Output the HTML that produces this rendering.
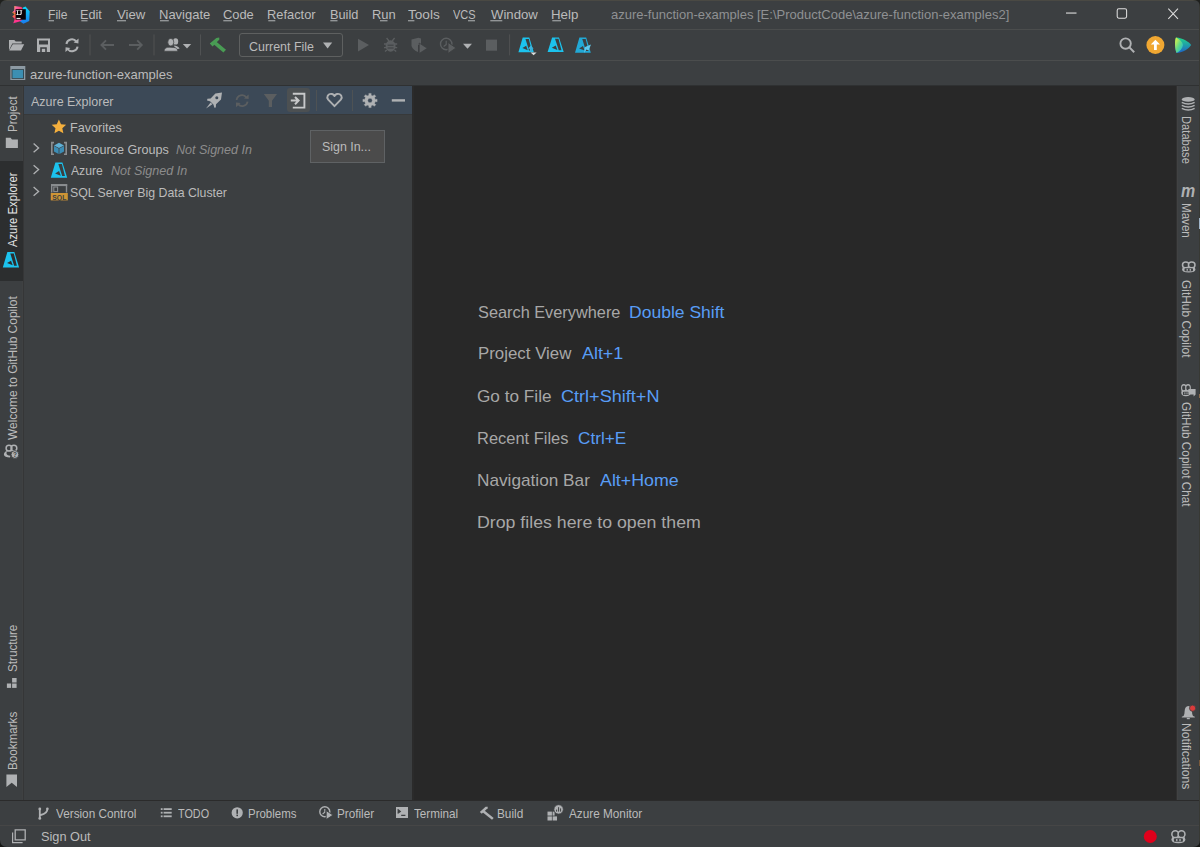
<!DOCTYPE html>
<html><head><meta charset="utf-8"><title>IntelliJ IDEA</title>
<style>
html,body{margin:0;padding:0;}
body{width:1200px;height:847px;overflow:hidden;background:#3c3f41;position:relative;font-family:"Liberation Sans",sans-serif;}
.b{position:absolute;}
.t{position:absolute;white-space:pre;transform-origin:0 0;font-family:"Liberation Sans",sans-serif;}
svg.ic{position:absolute;left:0;top:0;}
</style></head><body>
<!-- window top border -->
<div class="b" style="left:0;top:0;width:1200px;height:1px;background:#4a4943"></div>
<!-- menu / toolbar separators -->
<div class="b" style="left:0;top:29px;width:1200px;height:1px;background:#4b4d4d"></div>
<div class="b" style="left:0;top:60px;width:1200px;height:1px;background:#4b4d4d"></div>
<!-- nav bar bottom dark line -->
<div class="b" style="left:0;top:85px;width:1200px;height:1px;background:#2f3132"></div>
<!-- left stripe border -->
<div class="b" style="left:22px;top:86px;width:1px;height:714px;background:#3f4142"></div>
<div class="b" style="left:23px;top:86px;width:1px;height:714px;background:#353637"></div>
<div class="b" style="left:0;top:161px;width:23px;height:120px;background:#2c2e2f"></div>
<!-- selected stripe button -->
<!-- tool window header -->
<div class="b" style="left:24px;top:86px;width:388px;height:28px;background:#3c4957"></div>
<div class="b" style="left:24px;top:114px;width:388px;height:1px;background:#37393a"></div>
<!-- sign in icon hover bg -->
<div class="b" style="left:287px;top:88px;width:23px;height:24px;background:#4c5052;border-radius:3px"></div>
<!-- header separators -->
<div class="b" style="left:316px;top:90px;width:1px;height:21px;background:#4e5254"></div>
<div class="b" style="left:352px;top:90px;width:1px;height:21px;background:#4e5254"></div>
<!-- panel/editor border -->
<div class="b" style="left:412px;top:86px;width:2px;height:714px;background:#2b2b2b"></div>
<!-- editor -->
<div class="b" style="left:414px;top:86px;width:762px;height:714px;background:#282828"></div>
<!-- right stripe border -->
<div class="b" style="left:1176px;top:86px;width:1px;height:714px;background:#303030"></div>
<div class="b" style="left:1177px;top:86px;width:1px;height:714px;background:#414243"></div>
<!-- bottom dark line -->
<div class="b" style="left:0;top:800px;width:1200px;height:1px;background:#2b2b2b"></div>
<!-- status separator -->
<div class="b" style="left:0;top:825px;width:1200px;height:1px;background:#464646"></div>
<!-- sign in button -->
<div class="b" style="left:310px;top:130px;width:73px;height:31px;background:#4b4b4b;border:1px solid #5f6264"></div>
<!-- combobox -->
<div class="b" style="left:239px;top:33px;width:102px;height:22px;border:1px solid #5e6060;border-radius:3px"></div>
<!-- window right edge -->
<div class="b" style="left:1199px;top:0;width:1px;height:847px;background:#383934"></div>
<svg class="ic" width="1200" height="847" viewBox="0 0 1200 847"><rect x="48.5" y="20.2" width="5.5" height="1.1" fill="#a9abad"/><rect x="81.3" y="20.2" width="6.2" height="1.1" fill="#a9abad"/><rect x="117.0" y="20.2" width="9.0" height="1.1" fill="#a9abad"/><rect x="160.0" y="20.2" width="8.8" height="1.1" fill="#a9abad"/><rect x="223.3" y="20.2" width="8.7" height="1.1" fill="#a9abad"/><rect x="268.3" y="20.2" width="7.0" height="1.1" fill="#a9abad"/><rect x="330.3" y="20.2" width="7.2" height="1.1" fill="#a9abad"/><rect x="380.0" y="20.2" width="7.5" height="1.1" fill="#a9abad"/><rect x="408.0" y="20.2" width="6.4" height="1.1" fill="#a9abad"/><rect x="468.0" y="20.2" width="7.0" height="1.1" fill="#a9abad"/><rect x="490.3" y="20.2" width="12.0" height="1.1" fill="#a9abad"/><rect x="552.3" y="20.2" width="8.7" height="1.1" fill="#a9abad"/><defs><linearGradient id="ijl" x1="0" y1="0" x2="0" y2="1"><stop offset="0" stop-color="#f8d34a"/><stop offset="0.3" stop-color="#fb5fa8"/><stop offset="0.55" stop-color="#ff7b25"/><stop offset="1" stop-color="#fe2d73"/></linearGradient><linearGradient id="ijr" x1="0" y1="0" x2="0" y2="1"><stop offset="0" stop-color="#0ad7f7"/><stop offset="1" stop-color="#1a7af0"/></linearGradient><linearGradient id="ijt" x1="0" y1="0" x2="1" y2="0"><stop offset="0" stop-color="#fa7fd0"/><stop offset="1" stop-color="#fe2d73"/></linearGradient></defs><path d="M22.5,7.8 L25.5,6.4 L29.7,11.3 L29.2,21 L23.4,23.7 L19.5,21 L22.5,19 Z" fill="url(#ijr)"/><defs><linearGradient id="ijtop" x1="0" y1="0" x2="1" y2="0.3"><stop offset="0" stop-color="#f9d24a"/><stop offset="0.45" stop-color="#fd5aa0"/><stop offset="1" stop-color="#fe2d5e"/></linearGradient><linearGradient id="ijbot" x1="0" y1="0" x2="0.4" y2="1"><stop offset="0" stop-color="#ff9a1a"/><stop offset="0.5" stop-color="#fe4f6a"/><stop offset="1" stop-color="#fc2a9c"/></linearGradient></defs><path d="M14.3,6 L21.5,7 L23,9.5 L22.5,13.2 L12.1,12.6 L14.2,10.5 Z" fill="url(#ijtop)"/><path d="M12.1,12.4 L22.5,13 L22,20 L19.5,21.5 L13.3,23.2 L14.8,18.8 L12.3,16.4 L14.6,14.2 Z" fill="url(#ijbot)"/><rect x="15.6" y="9.2" width="10.2" height="10.5" fill="#0a0306"/><path d="M16.4,10.2 h2.3 v0.9 h-0.7 v2.9 h0.7 v0.9 h-2.3 v-0.9 h0.7 v-2.9 h-0.7 Z" fill="#f2f2f2"/><path d="M19.5,10.2 h2.7 v0.9 h-0.5 v2.7 q0,1.1 -1.2,1.1 h-1.2 v-0.9 h0.9 q0.4,0 0.4,-0.4 v-2.5 h-1.1 Z" fill="#f2f2f2"/><rect x="16.5" y="17.9" width="4" height="1.2" fill="#e8e8e8"/><rect x="1066" y="12.5" width="10.5" height="1.1" fill="#dedede"/><rect x="1117.2" y="8.8" width="9.4" height="9.4" rx="1.6" fill="none" stroke="#dedede" stroke-width="1.05"/><path d="M1168.3,8.6 L1178,18.9 M1178,8.6 L1168.3,18.9" stroke="#dedede" stroke-width="1.05"/><path d="M9,40 h5.3 l1.4,1.4 h6 v2 H12.3 L9,50.3 Z" fill="#afb1b3"/><path d="M12.8,44.2 H24.2 L21,50.5 H9.2 Z" fill="#afb1b3"/><path d="M37,38.6 H50 V52 H37 Z M39,40.6 V44.4 H48 V40.6 Z M40.2,47.2 V52 H46.8 V47.2 Z" fill="#afb1b3" fill-rule="evenodd"/><rect x="41.8" y="48.8" width="3.4" height="3.2" fill="#afb1b3"/><path d="M66.4,44 A5.6,5.6 0 0 1 76.4,41.6" fill="none" stroke="#afb1b3" stroke-width="2"/><path d="M73.6,42.6 L78.4,43.4 L78.6,38.6 Z" fill="#afb1b3"/><path d="M77.6,46.6 A5.6,5.6 0 0 1 67.6,49" fill="none" stroke="#afb1b3" stroke-width="2"/><path d="M70.4,48 L65.6,47.2 L65.4,52 Z" fill="#afb1b3"/><rect x="89.5" y="34.4" width="1" height="21" fill="#505253"/><rect x="153.5" y="34.4" width="1" height="21" fill="#505253"/><rect x="200.0" y="34.4" width="1" height="21" fill="#505253"/><rect x="509.1" y="34.4" width="1" height="21" fill="#505253"/><path d="M114,45 H101.6 M106,40.4 L101.4,45 L106,49.6" fill="none" stroke="#5b5e60" stroke-width="1.8"/><path d="M129,45 H141.6 M137.2,40.4 L141.8,45 L137.2,49.6" fill="none" stroke="#5b5e60" stroke-width="1.8"/><ellipse cx="175.6" cy="41.4" rx="2.6" ry="3.2" fill="#afb1b3"/><path d="M173.5,45.5 Q178.5,45.8 179.6,48.8 L176.6,49 Z" fill="#afb1b3"/><path d="M171.6,47.4 C168,47.2 166,47.4 165.2,48.6 C164.4,49.4 164.2,50.2 164.2,51.2 H177.6 C177.6,50 177.3,49 176.4,48.4 C175.6,47.6 174,47.4 171.6,47.4 Z" fill="#afb1b3" stroke="#3c3f41" stroke-width="0.6"/><ellipse cx="170.8" cy="42.2" rx="3" ry="3.8" fill="#afb1b3" stroke="#3c3f41" stroke-width="0.7"/><path d="M182.8,43.9 H191.2 L187,48.4 Z" fill="#afb1b3"/><path d="M209.8,43.6 L216.4,38 L219.2,37.6 L219.4,39.4 L212.6,46.4 Z" fill="#499c54"/><path d="M215.2,40.8 L226,49.8 L223.4,52.4 L212.8,43.6 Z" fill="#499c54"/><path d="M323,42.5 H332.2 L327.6,48.5 Z" fill="#afb1b3"/><path d="M358,38.7 L369,45.1 L358,51.6 Z" fill="#5b5e60"/><ellipse cx="390.6" cy="46" rx="5" ry="5.8" fill="#5b5e60"/><path d="M386.6,38 L389,41 M394.6,38 L392.2,41 M384,44 H397.2 M384,47.6 H397.2 M385,51.6 L386.8,50 M396.2,51.6 L394.4,50" stroke="#5b5e60" stroke-width="1.3"/><path d="M387.6,45.2 H393.6 M387.6,48 H393.6" stroke="#3c3f41" stroke-width="1"/><path d="M411.5,39.6 L418.4,37.8 L421,38.6 L421,45 L418,45 L418,52 Q413,50 411.5,46 Z" fill="#5b5e60"/><path d="M419.2,43 L427.3,48.3 L419.2,53.5 Z" fill="#5b5e60" stroke="#3c3f41" stroke-width="0.8"/><circle cx="446.2" cy="44" r="5.7" fill="none" stroke="#5b5e60" stroke-width="1.4"/><path d="M446.2,40.8 V44.6 L443.6,46.6" fill="none" stroke="#5b5e60" stroke-width="1.2"/><path d="M448,42.4 L456,47.9 L448,53.5 Z" fill="#5b5e60" stroke="#3c3f41" stroke-width="0.9"/><path d="M463,43.7 H472 L467.5,48.7 Z" fill="#afb1b3"/><rect x="486" y="39.6" width="11" height="11.1" fill="#5b5e60"/><g transform="translate(518.4,37.5) scale(0.9565,1.0207)" opacity="1.0"><path d="M4.5,0 H11.4 L16.1,14.5 H0 Z M7.4,1.4 H10.9 L13.9,12.9 H11.2 Z M4.2,10.4 L8.1,8.1 L9.8,12.5 Z" fill="#1cc3ee" fill-rule="evenodd"/></g><path d="M530.8,45.6 L533.6,48.8 H531.8 V52 H529.8 V48.8 H528 Z" fill="#3eb3dd"/><path d="M530.6,52.6 H536.6 L533.6,55.2 Z" fill="#dcdcdc"/><g transform="translate(547.6,37.4) scale(1.0000,1.0000)" opacity="1.0"><path d="M4.5,0 H11.4 L16.1,14.5 H0 Z M7.4,1.4 H10.9 L13.9,12.9 H11.2 Z M4.2,10.4 L8.1,8.1 L9.8,12.5 Z" fill="#1cc3ee" fill-rule="evenodd"/></g><g transform="translate(575,37.5) scale(0.9814,1.0483)" opacity="1.0"><path d="M4.5,0 H11.4 L16.1,14.5 H0 Z M7.4,1.4 H10.9 L13.9,12.9 H11.2 Z M4.2,10.4 L8.1,8.1 L9.8,12.5 Z" fill="#22a9d6" fill-rule="evenodd"/></g><path d="M585,47 L591,44.6 L588.6,50.4 L586.4,49.6 L584,53 L584.6,49 Z" fill="#5fc8ec"/><circle cx="1125.6" cy="43.6" r="5.2" fill="none" stroke="#afb1b3" stroke-width="1.9"/><path d="M1129.4,47.4 L1134.2,52.2" stroke="#afb1b3" stroke-width="2"/><circle cx="1155.4" cy="45" r="9" fill="#f0a732"/><path d="M1155.4,39.8 L1160,44.6 H1156.8 V50 H1154 V44.6 H1150.8 Z" fill="#ffffff"/><defs><linearGradient id="tbx" x1="0" y1="0" x2="1" y2="1"><stop offset="0" stop-color="#f9f43a"/><stop offset="0.5" stop-color="#5fd88a"/><stop offset="1" stop-color="#0fb4e8"/></linearGradient><linearGradient id="tbx2" x1="0" y1="0" x2="0" y2="1"><stop offset="0" stop-color="#21d789"/><stop offset="1" stop-color="#1e61c9"/></linearGradient></defs><path d="M1176,37.4 C1183,37.8 1189,41.8 1191.2,45 C1189,48.6 1183,52.6 1176.6,53 C1174.8,49 1174.5,41 1176,37.4 Z" fill="url(#tbx2)"/><path d="M1176,37.4 C1179.5,39 1182.5,42 1183,45 C1182.5,48.6 1180,51.5 1176.6,53 C1174.8,49 1174.5,41 1176,37.4 Z" fill="url(#tbx)"/><rect x="10.3" y="66" width="15" height="14" fill="#8d9aa3"/><rect x="11.6" y="69.2" width="12.4" height="9.6" fill="#2d3a40"/><rect x="12.4" y="69.9" width="10.8" height="8.2" fill="#3c8fb2"/><path d="M222,92.6 L215.4,93.6 L210.6,98.6 L207.4,98.8 L207,100.4 L210,101.2 L213.4,104.6 L214.4,107.8 L215.8,107.4 L216,104.2 L221,99.4 Z" fill="#afb1b3"/><circle cx="216.8" cy="97.8" r="1.5" fill="#3c4957"/><path d="M210.6,102.4 L206,108.6 L212.4,104.2 Z" fill="#afb1b3"/><path d="M236.6,100 A5.4,5.4 0 0 1 246.4,97.4" fill="none" stroke="#5b5e60" stroke-width="1.8"/><path d="M244,98.4 L248.6,99 L248.6,94.4 Z" fill="#5b5e60"/><path d="M247.6,101.6 A5.4,5.4 0 0 1 238,104" fill="none" stroke="#5b5e60" stroke-width="1.8"/><path d="M240.6,103 L236,102.6 L236,107.2 Z" fill="#5b5e60"/><path d="M263.8,94 H277 L272,100.8 V107 H268.8 V100.8 Z" fill="#5b5e60"/><path d="M292.8,93.8 H304.4 V107.6 H292.8" fill="none" stroke="#c8c9ca" stroke-width="1.9"/><path d="M290.8,100.6 H298 M295,97 L298.6,100.6 L295,104.2" fill="none" stroke="#c8c9ca" stroke-width="2"/><path d="M334.5,106.2 L328.2,99.6 Q326.6,97.6 327.8,95.6 Q329.4,93.4 332,94 Q333.6,94.4 334.5,96 Q335.4,94.4 337,94 Q339.6,93.4 341.2,95.6 Q342.4,97.6 340.8,99.6 Z" fill="none" stroke="#afb1b3" stroke-width="1.9" stroke-linejoin="round"/><path d="M368.89,95.21 L368.82,93.40 L371.18,93.40 L371.11,95.21 L372.96,95.98 L374.19,94.64 L375.86,96.31 L374.52,97.54 L375.29,99.39 L377.10,99.32 L377.10,101.68 L375.29,101.61 L374.52,103.46 L375.86,104.69 L374.19,106.36 L372.96,105.02 L371.11,105.79 L371.18,107.60 L368.82,107.60 L368.89,105.79 L367.04,105.02 L365.81,106.36 L364.14,104.69 L365.48,103.46 L364.71,101.61 L362.90,101.68 L362.90,99.32 L364.71,99.39 L365.48,97.54 L364.14,96.31 L365.81,94.64 L367.04,95.98 Z M372.3,100.5 A2.3,2.3 0 1 0 367.7,100.5 A2.3,2.3 0 1 0 372.3,100.5 Z" fill="#afb1b3" fill-rule="evenodd" stroke="#afb1b3" stroke-width="0.4" stroke-linejoin="round"/><rect x="391.8" y="99.2" width="13.2" height="2.4" fill="#afb1b3"/><path d="M33.6,143.5 L38.6,147.89999999999998 L33.6,152.29999999999998" fill="none" stroke="#afb1b3" stroke-width="1.3"/><path d="M33.6,165.20000000000002 L38.6,169.6 L33.6,174.0" fill="none" stroke="#afb1b3" stroke-width="1.3"/><path d="M33.6,187.0 L38.6,191.39999999999998 L33.6,195.79999999999998" fill="none" stroke="#afb1b3" stroke-width="1.3"/><path d="M58.90,119.60 L61.02,124.29 L66.13,124.85 L62.32,128.31 L63.37,133.35 L58.90,130.80 L54.43,133.35 L55.48,128.31 L51.67,124.85 L56.78,124.29 Z" fill="#f4af3d"/><path d="M54,142.6 H51.8 V154.2 H54 M64,142.6 H66.2 V154.2 H64" fill="none" stroke="#8a8d90" stroke-width="1.6"/><path d="M59,142.8 L64,145.4 L59,148 L54,145.4 Z" fill="#5fb0d6"/><path d="M54,145.9 L58.6,148.4 V154 L54,151.4 Z M59.4,148.4 L64,145.9 V151.4 L59.4,154 Z" fill="#3c8db5"/><g transform="translate(50.8,162.6) scale(1.0186,1.0483)" opacity="1.0"><path d="M4.5,0 H11.4 L16.1,14.5 H0 Z M7.4,1.4 H10.9 L13.9,12.9 H11.2 Z M4.2,10.4 L8.1,8.1 L9.8,12.5 Z" fill="#1cc3ee" fill-rule="evenodd"/></g><path d="M51.7,192.6 V185 H66.5 V192.6" fill="none" stroke="#8a8d90" stroke-width="1.4"/><rect x="51" y="184.1" width="16.2" height="2" fill="#8a8d90"/><rect x="53.8" y="187" width="3.8" height="4.6" fill="none" stroke="#8a8d90" stroke-width="1.1"/><rect x="50.8" y="193" width="17" height="7.4" fill="#cf9535"/><text x="59.3" y="199.6" font-family="Liberation Sans" font-size="7.6" font-weight="bold" fill="#3c3f41" text-anchor="middle" textLength="14" lengthAdjust="spacingAndGlyphs">SQL</text><path d="M5.8,137.8 H10.6 L12,139.6 H17.9 V148.1 H5.8 Z" fill="#afb1b3"/><g transform="translate(2.8,252) scale(1.0124,1.0690)" opacity="1.0"><path d="M4.5,0 H11.4 L16.1,14.5 H0 Z M7.4,1.4 H10.9 L13.9,12.9 H11.2 Z M4.2,10.4 L8.1,8.1 L9.8,12.5 Z" fill="#1cc3ee" fill-rule="evenodd"/></g><circle cx="9" cy="448.2" r="2.9" fill="none" stroke="#afb1b3" stroke-width="1.5"/><circle cx="13.9" cy="448.2" r="2.9" fill="none" stroke="#afb1b3" stroke-width="1.5"/><path d="M6.9,450.8 Q3.8,452.2 3.9,454.8 Q4.6,457.4 10,457.6 L10.4,455.8 Q6.6,455.4 6.5,453.6 Z" fill="#afb1b3"/><circle cx="14.9" cy="454.5" r="3.9" fill="#afb1b3" stroke="#3c3f41" stroke-width="0.9"/><text x="14.9" y="457" font-family="Liberation Sans" font-size="6.4" font-weight="bold" fill="#3c3f41" text-anchor="middle">?</text><rect x="12.1" y="678" width="4.5" height="4.5" fill="#afb1b3"/><rect x="6.9" y="683.5" width="4.2" height="4.4" fill="#afb1b3"/><rect x="12.1" y="683.5" width="4.5" height="4.4" fill="#afb1b3"/><path d="M6.4,774.4 H17 V787.1 L11.7,782.8 L6.4,787.1 Z" fill="#afb1b3"/><ellipse cx="1188.2" cy="99.4" rx="6.4" ry="2.3" fill="#afb1b3"/><path d="M1181.8,102.4 Q1188.2,105.6 1194.6,102.4 M1181.8,105.4 Q1188.2,108.6 1194.6,105.4 M1181.8,108.4 Q1188.2,111.6 1194.6,108.4" fill="none" stroke="#afb1b3" stroke-width="1.6"/><text x="1188.2" y="197" font-family="Liberation Sans" font-size="19" font-weight="bold" font-style="italic" fill="#afb1b3" text-anchor="middle" textLength="14.2" lengthAdjust="spacingAndGlyphs">m</text><g transform="translate(1181.3,261.4) scale(0.9933,0.8692)"><path d="M0.8,9.2 Q0.8,6.6 3,6 L12,6 Q14.2,6.6 14.2,9.2 Q14.2,12.6 7.5,12.8 Q0.8,12.6 0.8,9.2 Z" fill="#afb1b3"/><circle cx="4.5" cy="4" r="3.3" fill="#3c3f41" stroke="#afb1b3" stroke-width="1.5"/><circle cx="10.5" cy="4" r="3.3" fill="#3c3f41" stroke="#afb1b3" stroke-width="1.5"/><rect x="3.2" y="8" width="8.6" height="3.4" rx="0.8" fill="#3c3f41"/><rect x="5.3" y="8.6" width="1.3" height="2.2" fill="#afb1b3"/><rect x="8.4" y="8.6" width="1.3" height="2.2" fill="#afb1b3"/></g><g transform="translate(1180.7,384.1) scale(0.7000,0.9538)"><path d="M0.8,9.2 Q0.8,6.6 3,6 L12,6 Q14.2,6.6 14.2,9.2 Q14.2,12.6 7.5,12.8 Q0.8,12.6 0.8,9.2 Z" fill="#afb1b3"/><circle cx="4.5" cy="4" r="3.3" fill="#3c3f41" stroke="#afb1b3" stroke-width="1.5"/><circle cx="10.5" cy="4" r="3.3" fill="#3c3f41" stroke="#afb1b3" stroke-width="1.5"/><rect x="3.2" y="8" width="8.6" height="3.4" rx="0.8" fill="#3c3f41"/><rect x="5.3" y="8.6" width="1.3" height="2.2" fill="#afb1b3"/><rect x="8.4" y="8.6" width="1.3" height="2.2" fill="#afb1b3"/></g><path d="M1188.4,389 H1195.6 V394.6 L1193.6,396.5 V394.6 H1188.4 Z" fill="#afb1b3"/><path d="M1183.6,716 Q1184.6,714.6 1184.6,711.6 Q1184.8,706.4 1188.3,706 Q1191.8,706.4 1192,711.6 Q1192,714.6 1193,716 L1194.8,716.8 V717.6 H1181.8 V716.8 Z" fill="#afb1b3"/><rect x="1186.8" y="717.8" width="3" height="1.4" fill="#afb1b3"/><circle cx="1192.6" cy="708.2" r="3.1" fill="#db3b3b" stroke="#3c3f41" stroke-width="0.8"/><circle cx="39.8" cy="809" r="1.4" fill="#afb1b3"/><circle cx="39.8" cy="818.4" r="1.4" fill="#afb1b3"/><circle cx="47.4" cy="808.8" r="1.3" fill="#afb1b3"/><path d="M39.8,809 V818.4 M47.4,808.8 Q47.6,813.6 40.6,815" fill="none" stroke="#afb1b3" stroke-width="1.8"/><rect x="160.8" y="808.2" width="1.8" height="1.8" fill="#afb1b3"/><rect x="163.6" y="808.2" width="8.1" height="1.8" fill="#afb1b3"/><rect x="160.8" y="811.8" width="1.8" height="1.8" fill="#afb1b3"/><rect x="163.6" y="811.8" width="8.1" height="1.8" fill="#afb1b3"/><rect x="160.8" y="815.4" width="1.8" height="1.8" fill="#afb1b3"/><rect x="163.6" y="815.4" width="8.1" height="1.8" fill="#afb1b3"/><circle cx="237.2" cy="812.8" r="5.6" fill="#afb1b3"/><rect x="236.4" y="809.4" width="1.6" height="4.4" fill="#3c3f41"/><rect x="236.4" y="814.6" width="1.6" height="1.6" fill="#3c3f41"/><circle cx="324.8" cy="811.8" r="5" fill="none" stroke="#afb1b3" stroke-width="1.4"/><path d="M324.8,809 V812.3 L322.6,814" fill="none" stroke="#afb1b3" stroke-width="1.1"/><path d="M326.2,810.6 L333,815.1 L326.2,819.6 Z" fill="#afb1b3" stroke="#3c3f41" stroke-width="0.9"/><path d="M396,807 H408 V818 H396 Z M397.6,809.2 L400.4,811.4 L397.6,813.6 M401.2,815 H405" fill="#afb1b3" fill-rule="evenodd"/><path d="M397.8,809.4 L400.4,811.4 L397.8,813.4 M401.2,815.4 H405.4" fill="none" stroke="#3c3f41" stroke-width="1.1"/><path d="M479.8,812 L485.6,806.8 L487.8,806.8 L487.6,808.2 L481.8,813.8 Z" fill="#afb1b3"/><path d="M483.2,809.6 L493.7,818 L492,819.7 L481.6,811.4 Z" fill="#afb1b3"/><rect x="547.5" y="811.6" width="4.4" height="4" fill="#afb1b3"/><rect x="547.5" y="816.4" width="4.4" height="4.1" fill="#afb1b3"/><rect x="552.6" y="816.4" width="4.4" height="4.1" fill="#afb1b3"/><rect x="552.6" y="811.6" width="2" height="4" fill="#afb1b3"/><circle cx="558.6" cy="809.4" r="4.7" fill="#afb1b3" stroke="#3c3f41" stroke-width="0.8"/><path d="M556.6,811.6 V809.6 M558.6,811.6 V807.2 M560.6,811.6 V808.4" stroke="#3c3f41" stroke-width="1"/><path d="M0,0 H7 Q0,0 0,7 Z" fill="#1f201d"/><path d="M1193,0 H1200 V7 Q1200,0 1193,0 Z" fill="#1f201d"/><path d="M1200,840 V847 H1193 Q1200,847 1200,840 Z" fill="#151614"/><path d="M0,840 V847 H7 Q0,847 0,840 Z" fill="#151614"/><rect x="1199" y="218" width="1" height="11" fill="#9fb4c8"/><rect x="1199" y="394" width="1" height="4" fill="#8a6a4a"/><rect x="1199" y="760" width="1" height="6" fill="#7a5a3a"/><path d="M15.2,829.8 H25.2 V839.8 H15.2 Z" fill="none" stroke="#afb1b3" stroke-width="1.3"/><path d="M12.6,832.4 V842.6 H22.6" fill="none" stroke="#afb1b3" stroke-width="1.2"/><circle cx="1150.3" cy="836.5" r="6.5" fill="#e0001b"/><g transform="translate(1170.6,830) scale(1.0400,1.0385)"><path d="M0.8,9.2 Q0.8,6.6 3,6 L12,6 Q14.2,6.6 14.2,9.2 Q14.2,12.6 7.5,12.8 Q0.8,12.6 0.8,9.2 Z" fill="#afb1b3"/><circle cx="4.5" cy="4" r="3.3" fill="#3c3f41" stroke="#afb1b3" stroke-width="1.5"/><circle cx="10.5" cy="4" r="3.3" fill="#3c3f41" stroke="#afb1b3" stroke-width="1.5"/><rect x="3.2" y="8" width="8.6" height="3.4" rx="0.8" fill="#3c3f41"/><rect x="5.3" y="8.6" width="1.3" height="2.2" fill="#afb1b3"/><rect x="8.4" y="8.6" width="1.3" height="2.2" fill="#afb1b3"/></g></svg>
<div class="t" style="left:47.77px;top:8.20px;font-size:13px;line-height:13px;color:#bbbbbb;transform:scaleX(0.9300)">File</div>
<div class="t" style="left:80.33px;top:8.20px;font-size:13px;line-height:13px;color:#bbbbbb;transform:scaleX(0.9727)">Edit</div>
<div class="t" style="left:117.00px;top:8.20px;font-size:13px;line-height:13px;color:#bbbbbb;transform:scaleX(1.0107)">View</div>
<div class="t" style="left:159.00px;top:8.20px;font-size:13px;line-height:13px;color:#bbbbbb;transform:scaleX(1.0000)">Navigate</div>
<div class="t" style="left:223.30px;top:8.20px;font-size:13px;line-height:13px;color:#bbbbbb;transform:scaleX(0.9903)">Code</div>
<div class="t" style="left:267.31px;top:8.20px;font-size:13px;line-height:13px;color:#bbbbbb;transform:scaleX(0.9896)">Refactor</div>
<div class="t" style="left:329.62px;top:8.20px;font-size:13px;line-height:13px;color:#bbbbbb;transform:scaleX(0.9821)">Build</div>
<div class="t" style="left:371.50px;top:8.20px;font-size:13px;line-height:13px;color:#bbbbbb;transform:scaleX(0.9955)">Run</div>
<div class="t" style="left:408.00px;top:8.20px;font-size:13px;line-height:13px;color:#bbbbbb;transform:scaleX(1.0467)">Tools</div>
<div class="t" style="left:452.75px;top:8.20px;font-size:13px;line-height:13px;color:#bbbbbb;transform:scaleX(0.8463)">VCS</div>
<div class="t" style="left:490.60px;top:8.20px;font-size:13px;line-height:13px;color:#bbbbbb;transform:scaleX(1.0106)">Window</div>
<div class="t" style="left:551.23px;top:8.20px;font-size:13px;line-height:13px;color:#bbbbbb;transform:scaleX(1.0192)">Help</div>
<div class="t" style="left:610.50px;top:8.20px;font-size:13px;line-height:13px;color:#8f9193;transform:scaleX(1.0003)">azure-function-examples [E:\ProductCode\azure-function-examples2]</div>
<div class="t" style="left:249.00px;top:40.00px;font-size:13px;line-height:13px;color:#bbbbbb;transform:scaleX(0.9559)">Current File</div>
<div class="t" style="left:30.00px;top:67.70px;font-size:13px;line-height:13px;color:#bbbbbb;transform:scaleX(1.0007)">azure-function-examples</div>
<div class="t" style="left:31.20px;top:95.00px;font-size:13px;line-height:13px;color:#bbbbbb;transform:scaleX(0.9593)">Azure Explorer</div>
<div class="t" style="left:70.23px;top:121.00px;font-size:13px;line-height:13px;color:#bbbbbb;transform:scaleX(0.9712)">Favorites</div>
<div class="t" style="left:70.33px;top:142.50px;font-size:13px;line-height:13px;color:#bbbbbb;transform:scaleX(0.9693)">Resource Groups</div>
<div class="t" style="left:176.30px;top:142.50px;font-size:13px;line-height:13px;color:#8c8c8c;font-style:italic;transform:scaleX(0.9646)">Not Signed In</div>
<div class="t" style="left:71.20px;top:164.10px;font-size:13px;line-height:13px;color:#bbbbbb;transform:scaleX(0.9353)">Azure</div>
<div class="t" style="left:110.80px;top:164.10px;font-size:13px;line-height:13px;color:#8c8c8c;font-style:italic;transform:scaleX(0.9671)">Not Signed In</div>
<div class="t" style="left:70.25px;top:185.70px;font-size:13px;line-height:13px;color:#bbbbbb;transform:scaleX(0.9473)">SQL Server Big Data Cluster</div>
<div class="t" style="left:321.75px;top:139.90px;font-size:13px;line-height:13px;color:#bbbbbb;transform:scaleX(0.9540)">Sign In...</div>
<div class="t" style="left:477.54px;top:303.50px;font-size:17px;line-height:17px;color:#a7a7a7;transform:scaleX(0.9599)">Search Everywhere</div>
<div class="t" style="left:629.17px;top:303.50px;font-size:17px;line-height:17px;color:#589df6;transform:scaleX(1.0304)">Double Shift</div>
<div class="t" style="left:477.51px;top:345.40px;font-size:17px;line-height:17px;color:#a7a7a7;transform:scaleX(0.9915)">Project View</div>
<div class="t" style="left:582.00px;top:345.40px;font-size:17px;line-height:17px;color:#589df6;transform:scaleX(1.0513)">Alt+1</div>
<div class="t" style="left:476.99px;top:387.80px;font-size:17px;line-height:17px;color:#a7a7a7;transform:scaleX(1.0111)">Go to File</div>
<div class="t" style="left:560.64px;top:387.80px;font-size:17px;line-height:17px;color:#589df6;transform:scaleX(1.0637)">Ctrl+Shift+N</div>
<div class="t" style="left:477.03px;top:429.60px;font-size:17px;line-height:17px;color:#a7a7a7;transform:scaleX(0.9677)">Recent Files</div>
<div class="t" style="left:577.74px;top:429.60px;font-size:17px;line-height:17px;color:#589df6;transform:scaleX(1.0098)">Ctrl+E</div>
<div class="t" style="left:476.99px;top:472.20px;font-size:17px;line-height:17px;color:#a7a7a7;transform:scaleX(1.0126)">Navigation Bar</div>
<div class="t" style="left:600.20px;top:472.20px;font-size:17px;line-height:17px;color:#589df6;transform:scaleX(1.0473)">Alt+Home</div>
<div class="t" style="left:476.96px;top:514.00px;font-size:17px;line-height:17px;color:#a7a7a7;transform:scaleX(1.0432)">Drop files here to open them</div>
<div class="t" style="left:5.90px;top:131.98px;font-size:13px;line-height:13px;color:#bbbbbb;transform:rotate(-90deg) scaleX(0.8800)">Project</div>
<div class="t" style="left:5.90px;top:246.60px;font-size:13px;line-height:13px;color:#e6e6e6;transform:rotate(-90deg) scaleX(0.8651)">Azure Explorer</div>
<div class="t" style="left:5.90px;top:440.10px;font-size:13px;line-height:13px;color:#bbbbbb;transform:rotate(-90deg) scaleX(0.9185)">Welcome to GitHub Copilot</div>
<div class="t" style="left:5.90px;top:672.20px;font-size:13px;line-height:13px;color:#bbbbbb;transform:rotate(-90deg) scaleX(0.8981)">Structure</div>
<div class="t" style="left:5.90px;top:769.90px;font-size:13px;line-height:13px;color:#bbbbbb;transform:rotate(-90deg) scaleX(0.8953)">Bookmarks</div>
<div class="t" style="left:1193.00px;top:115.54px;font-size:13px;line-height:13px;color:#bbbbbb;transform:rotate(90deg) scaleX(0.8600)">Database</div>
<div class="t" style="left:1193.00px;top:203.21px;font-size:13px;line-height:13px;color:#bbbbbb;transform:rotate(90deg) scaleX(0.8921)">Maven</div>
<div class="t" style="left:1193.00px;top:279.80px;font-size:13px;line-height:13px;color:#bbbbbb;transform:rotate(90deg) scaleX(0.9165)">GitHub Copilot</div>
<div class="t" style="left:1193.00px;top:402.30px;font-size:13px;line-height:13px;color:#bbbbbb;transform:rotate(90deg) scaleX(0.9043)">GitHub Copilot Chat</div>
<div class="t" style="left:1193.00px;top:723.26px;font-size:13px;line-height:13px;color:#bbbbbb;transform:rotate(90deg) scaleX(0.9357)">Notifications</div>
<div class="t" style="left:55.80px;top:807.30px;font-size:13px;line-height:13px;color:#bbbbbb;transform:scaleX(0.9034)">Version Control</div>
<div class="t" style="left:177.50px;top:807.30px;font-size:13px;line-height:13px;color:#bbbbbb;transform:scaleX(0.8324)">TODO</div>
<div class="t" style="left:248.12px;top:807.30px;font-size:13px;line-height:13px;color:#bbbbbb;transform:scaleX(0.8815)">Problems</div>
<div class="t" style="left:337.10px;top:807.30px;font-size:13px;line-height:13px;color:#bbbbbb;transform:scaleX(0.9000)">Profiler</div>
<div class="t" style="left:414.00px;top:807.30px;font-size:13px;line-height:13px;color:#bbbbbb;transform:scaleX(0.8980)">Terminal</div>
<div class="t" style="left:497.39px;top:807.30px;font-size:13px;line-height:13px;color:#bbbbbb;transform:scaleX(0.9071)">Build</div>
<div class="t" style="left:569.20px;top:807.30px;font-size:13px;line-height:13px;color:#bbbbbb;transform:scaleX(0.9049)">Azure Monitor</div>
<div class="t" style="left:41.02px;top:830.00px;font-size:13px;line-height:13px;color:#bbbbbb;transform:scaleX(0.9800)">Sign Out</div>
</body></html>
